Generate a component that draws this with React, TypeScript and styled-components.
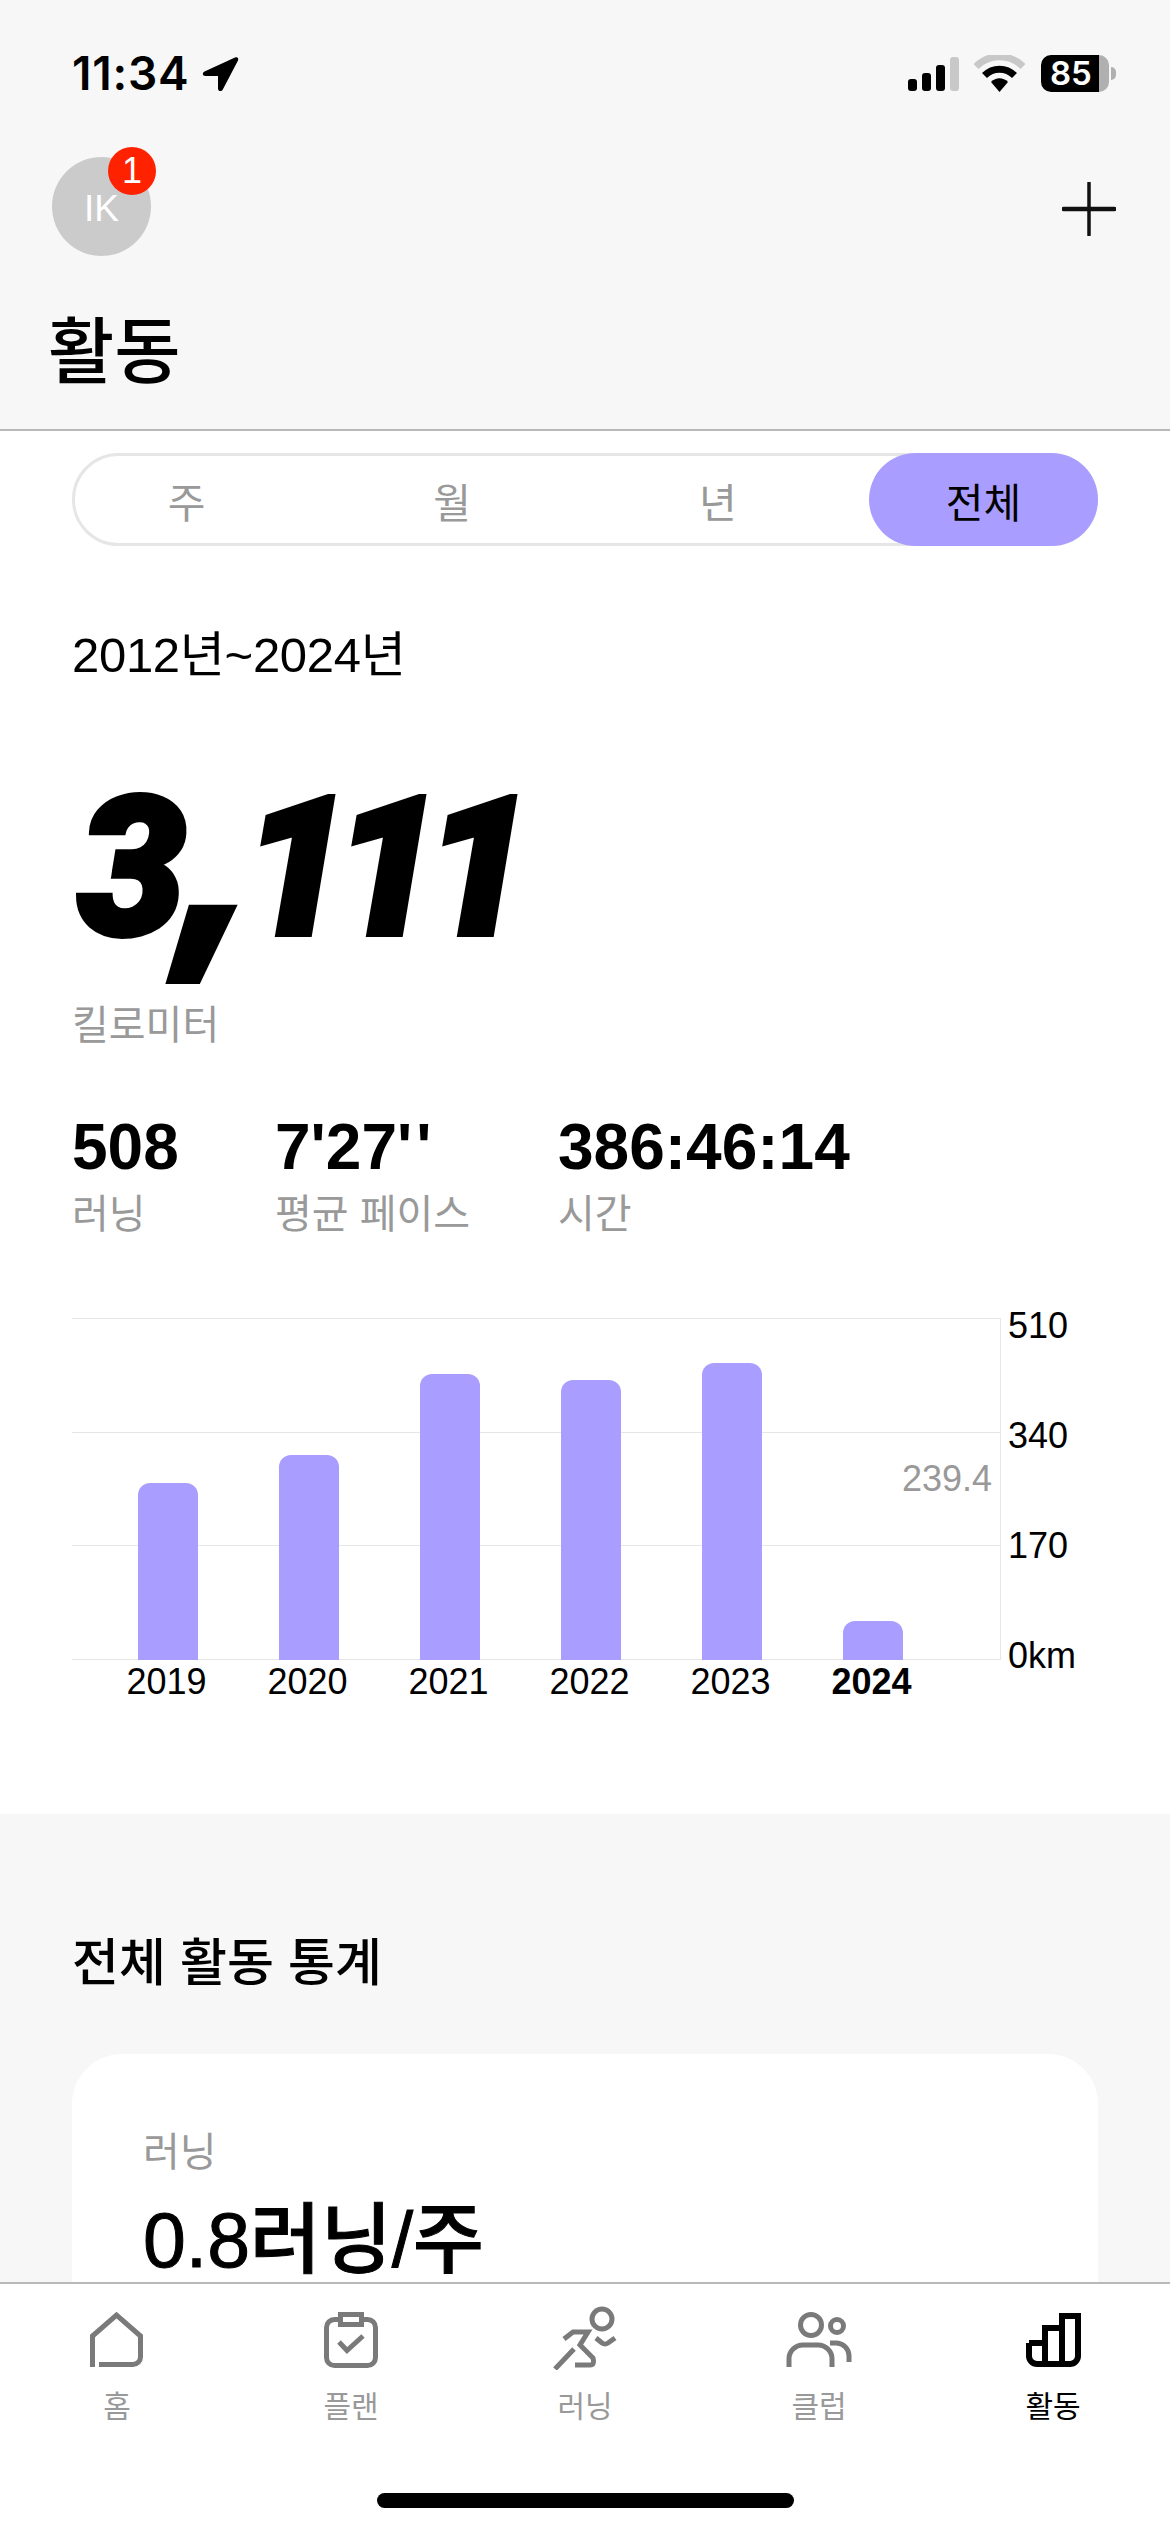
import React from 'react';
import styled, { createGlobalStyle } from 'styled-components';

const GlobalStyle = createGlobalStyle`
  html, body { margin: 0; padding: 0; background: #fff; }
  * { box-sizing: border-box; }
  body { font-family: "Liberation Sans", "Noto Sans CJK KR", sans-serif; color: #000; }
`;

const Page = styled.div`
  width: 1170px;
  height: 2532px;
  display: flex;
  flex-direction: column;
  overflow: hidden;
  background: #fff;
`;

const Header = styled.header`
  flex: none;
  height: 431px;
  background: #f7f7f7;
  border-bottom: 2px solid #b8b8b8;
`;

const StatusBar = styled.div`
  height: 147px;
  padding: 55px 54px 0 72px;
  display: flex;
  justify-content: space-between;
  align-items: flex-start;
`;

const TimeGroup = styled.div`
  display: flex;
  align-items: center;
  gap: 13px;
  height: 37px;
`;

const Time = styled.span`
  font-family: Inter, sans-serif;
  font-size: 46px;
  font-weight: 600;
  letter-spacing: 0.8px;
  line-height: 37px;
`;

const StatusIcons = styled.div`
  display: flex;
  align-items: center;
  height: 37px;
`;

const WifiIcon = styled.svg`
  margin-left: 14px;
`;

const Battery = styled.div`
  width: 68px;
  height: 37px;
  margin-left: 15px;
  border-radius: 10px;
  background: linear-gradient(90deg, #000 0 58px, #b0b0b0 58px);
  color: #fff;
  font-family: Inter, sans-serif;
  font-size: 33px;
  font-weight: 600;
  line-height: 37px;
  padding-left: 9px;
`;

const BatteryNub = styled.div`
  width: 5px;
  height: 13px;
  margin-left: 2px;
  border-radius: 0 6px 6px 0;
  background: #b0b0b0;
`;

const NavRow = styled.div`
  padding: 0 54px 0 52px;
  display: flex;
  justify-content: space-between;
  align-items: center;
`;

const Avatar = styled.div`
  position: relative;
  width: 99px;
  height: 99px;
  margin-top: 10px;
  border-radius: 50%;
  background: #cbcbcb;
  color: #fff;
  font-size: 37px;
  display: flex;
  align-items: center;
  justify-content: center;
  padding-top: 4px;
`;

const Badge = styled.span`
  position: absolute;
  top: -10px;
  left: 56px;
  width: 48px;
  height: 48px;
  border-radius: 50%;
  background: #ff2200;
  color: #fff;
  font-size: 36px;
  line-height: 48px;
  text-align: center;
`;

const PlusIcon = styled.svg`
  margin-top: 14px;
`;

const Title = styled.h1`
  margin: 56px 0 0 48px;
  font-size: 72px;
  font-weight: 500;
  line-height: 80px;
`;

const Content = styled.main`
  flex: 1;
  min-height: 0;
  overflow: hidden;
`;

const Summary = styled.section`
  height: 1383px;
  padding: 22px 72px 0;
  background: #fff;
`;

const Segments = styled.div`
  height: 93px;
  display: flex;
  justify-content: space-between;
  border: 3px solid #e6e6e6;
  border-radius: 47px;
  margin-bottom: 79px;
`;

const Segment = styled.div<{ $active?: boolean }>`
  width: 229px;
  margin: -3px;
  border-radius: 47px;
  background: ${p => (p.$active ? '#a99eff' : 'transparent')};
  color: ${p => (p.$active ? '#000' : '#999')};
  font-size: 41px;
  display: flex;
  align-items: center;
  justify-content: center;
`;

const DateRange = styled.div`
  font-size: 49px;
  line-height: 60px;
  letter-spacing: -0.3px;
`;

const BigNumber = styled.div`
  height: 180px;
  margin: 94px 0 0 6px;
  font-family: Roboto, "Liberation Sans", sans-serif;
  font-size: 192px;
  font-weight: 900;
  font-style: italic;
  line-height: 180px;
  letter-spacing: -17px;
  -webkit-text-stroke: 6px #000;
`;

const Comma = styled.span`
  font-family: Inter, Roboto, sans-serif;
  font-size: 225px;
  line-height: 0;
  margin: 0 -16px 0 6px;
  letter-spacing: 0;
`;

const Unit = styled.div`
  margin-top: 36px;
  font-size: 40px;
  line-height: 60px;
  color: #999;
`;

const Stats = styled.div`
  display: flex;
  margin-top: 55px;
`;

const Stat = styled.div<{ $width: number }>`
  width: ${p => p.$width}px;
`;

const StatValue = styled.div`
  font-size: 64px;
  font-weight: 700;
  line-height: 74px;
`;

const Ticks = styled.span`
  letter-spacing: 4px;
`;

const StatLabel = styled.div`
  margin-top: 2px;
  font-size: 40px;
  line-height: 56px;
  color: #999;
`;

const Chart = styled.div`
  display: flex;
  margin-top: 76px;
`;

const ChartMain = styled.div`
  width: 929px;
`;

const Plot = styled.div`
  position: relative;
  height: 342px;
  display: flex;
  align-items: flex-end;
  padding-left: 25px;
  border-right: 1px solid #e8e8e8;
`;

const GridLine = styled.div<{ $top: number }>`
  position: absolute;
  left: 0;
  right: 0;
  top: ${p => p.$top}px;
  height: 1px;
  background: #e6e6e6;
`;

const BarCell = styled.div`
  position: relative;
  width: 141px;
  display: flex;
  justify-content: center;
`;

const Bar = styled.div`
  width: 60px;
  background: #a99eff;
  border-radius: 12px 12px 0 0;
`;

const AverageLabel = styled.span`
  position: absolute;
  right: 8px;
  top: 141px;
  font-size: 36px;
  line-height: 40px;
  color: #999;
`;

const XAxis = styled.div`
  display: flex;
  padding-left: 25px;
`;

const XLabel = styled.div<{ $bold?: boolean }>`
  width: 141px;
  padding-right: 2px;
  text-align: center;
  font-size: 36px;
  line-height: 44px;
  font-weight: ${p => (p.$bold ? 700 : 400)};
`;

const YAxis = styled.div`
  margin-left: 7px;
  display: flex;
  flex-direction: column;
  font-size: 36px;
  line-height: 40px;
`;

const YLabel = styled.div`
  height: 110px;
  margin-top: -12px;
  & + & {
    margin-top: 0;
  }
`;

const Overall = styled.section`
  height: 600px;
  padding: 115px 72px 0;
  background: #f7f7f7;
`;

const SectionTitle = styled.h2`
  margin: 0;
  font-size: 51px;
  font-weight: 500;
  line-height: 70px;
`;

const Card = styled.div`
  margin-top: 55px;
  height: 500px;
  padding: 70px 71px;
  background: #fff;
  border-radius: 50px;
`;

const CardLabel = styled.div`
  font-size: 40px;
  line-height: 56px;
  color: #999;
`;

const CardValue = styled.div`
  margin-top: 15px;
  font-size: 77px;
  font-weight: 500;
  line-height: 90px;
  -webkit-text-stroke: 1px #000;
`;

const TabBar = styled.nav`
  flex: none;
  position: relative;
  height: 250px;
  background: #fff;
  border-top: 2px solid #b8b8b8;
`;

const Tabs = styled.div`
  display: grid;
  grid-template-columns: repeat(5, 234px);
  padding-top: 18px;
`;

const Tab = styled.div<{ $active?: boolean }>`
  display: flex;
  flex-direction: column;
  align-items: center;
  color: ${p => (p.$active ? '#000' : '#999')};
  font-size: 30px;
  line-height: 36px;
  svg {
    display: block;
    margin: 0 0 19px;
  }
`;

const HomeIndicator = styled.div`
  position: absolute;
  left: 377px;
  bottom: 24px;
  width: 417px;
  height: 15px;
  border-radius: 8px;
  background: #000;
`;

const years = [
  { year: 2019, height: 177 },
  { year: 2020, height: 205 },
  { year: 2021, height: 286 },
  { year: 2022, height: 280 },
  { year: 2023, height: 297 },
  { year: 2024, height: 39 },
];

const IconSvg = ({ children, color = '#7a7a7a', width = 5 }: { children: React.ReactNode; color?: string; width?: number }) => (
  <svg width="70" height="68" viewBox="0 0 70 68" fill="none" stroke={color} strokeWidth={width}>
    {children}
  </svg>
);

const tabs = [
  {
    label: '홈',
    icon: (
      <IconSvg>
        <path d="M10.500 65V34L34.500 13L58.500 34V55a7.500 7.500 0 0 1-7.500 7.500H17" />
      </IconSvg>
    ),
  },
  {
    label: '플랜',
    icon: (
      <IconSvg>
        <rect x="10.500" y="17.500" width="49" height="46" rx="8" />
        <rect x="24.500" y="12.500" width="21" height="10" fill="#fff" />
        <path d="M23 40l8 8.500 16-14.500" />
      </IconSvg>
    ),
  },
  {
    label: '러닝',
    icon: (
      <IconSvg>
        <circle cx="52" cy="17" r="10" />
        <path d="M14 37l9-7h15l-8 13 13 13q2 7-3 7H25" />
        <path d="M24 47L5 67M46 36l6 5q3 2 6 0l7-5" />
      </IconSvg>
    ),
  },
  {
    label: '클럽',
    icon: (
      <IconSvg>
        <circle cx="27" cy="23" r="10.500" />
        <circle cx="53" cy="24" r="6.500" />
        <path d="M5 65V57a14 14 0 0 1 14-14h15a14 14 0 0 1 14 14v8" />
        <path d="M46 41h6a13 13 0 0 1 13 13v6" />
      </IconSvg>
    ),
  },
  {
    label: '활동',
    active: true,
    icon: (
      <IconSvg color="#000" width={6}>
        <path d="M11 41H27M27 62V26H44M44 62V14H60V54a8 8 0 0 1-8 8H19a8 8 0 0 1-8-8V41" />
      </IconSvg>
    ),
  },
];

export default function App() {
  return (
    <>
      <GlobalStyle />
      <Page>
        <Header>
          <StatusBar>
            <TimeGroup>
              <Time>11:34</Time>
              <svg width="37" height="36" viewBox="0 0 37 36">
                <path d="M33 1.500 2.500 15.500c-2.500 1.200-2 4.500 1 4.500H16v12.500c0 3 3.500 3.500 4.800 1L36 4.500c1-2.500-.8-4-3-3z" fill="#000" />
              </svg>
            </TimeGroup>
            <StatusIcons>
              <svg width="52" height="36" viewBox="0 0 52 36">
                <rect x="0" y="23" width="9" height="12" rx="3" fill="#000" />
                <rect x="14" y="17" width="9" height="18" rx="3" fill="#000" />
                <rect x="28" y="9" width="9" height="26" rx="3" fill="#000" />
                <rect x="42" y="1" width="9" height="34" rx="3" fill="#c8c8c8" />
              </svg>
              <WifiIcon width="52" height="38" viewBox="0 0 52 38">
                <path d="M2 11.500C15 -1.500 36 -1.500 49 11.500" stroke="#c8c8c8" strokeWidth="7" fill="none" />
                <path d="M10.500 20.500C19 12 32 12 40.500 20.500" stroke="#000" strokeWidth="7" fill="none" />
                <path d="M17 27c5-5 12-5 17 0l-8.500 10z" fill="#000" />
              </WifiIcon>
              <Battery>85</Battery>
              <BatteryNub />
            </StatusIcons>
          </StatusBar>
          <NavRow>
            <Avatar>
              IK
              <Badge>1</Badge>
            </Avatar>
            <PlusIcon width="54" height="54" viewBox="0 0 54 54">
              <path d="M27 1v52" stroke="#111" strokeWidth="3.500" strokeLinecap="round" />
              <path d="M1.500 27h51" stroke="#111" strokeWidth="4.500" strokeLinecap="round" />
            </PlusIcon>
          </NavRow>
          <Title>활동</Title>
        </Header>
        <Content>
          <Summary>
            <Segments>
              <Segment>주</Segment>
              <Segment>월</Segment>
              <Segment>년</Segment>
              <Segment $active>전체</Segment>
            </Segments>
            <DateRange>2012년~2024년</DateRange>
            <BigNumber>
              3<Comma>,</Comma>111
            </BigNumber>
            <Unit>킬로미터</Unit>
            <Stats>
              <Stat $width={203}>
                <StatValue>508</StatValue>
                <StatLabel>러닝</StatLabel>
              </Stat>
              <Stat $width={283}>
                <StatValue>
                  7'27<Ticks>''</Ticks>
                </StatValue>
                <StatLabel>평균 페이스</StatLabel>
              </Stat>
              <Stat $width={400}>
                <StatValue>386:46:14</StatValue>
                <StatLabel>시간</StatLabel>
              </Stat>
            </Stats>
            <Chart>
              <ChartMain>
                <Plot>
                  <GridLine $top={0} />
                  <GridLine $top={114} />
                  <GridLine $top={227} />
                  <GridLine $top={341} />
                  {years.map(y => (
                    <BarCell key={y.year}>
                      <Bar style={{ height: y.height }} />
                    </BarCell>
                  ))}
                  <AverageLabel>239.4</AverageLabel>
                </Plot>
                <XAxis>
                  {years.map(y => (
                    <XLabel key={y.year} $bold={y.year === 2024}>
                      {y.year}
                    </XLabel>
                  ))}
                </XAxis>
              </ChartMain>
              <YAxis>
                <YLabel>510</YLabel>
                <YLabel>340</YLabel>
                <YLabel>170</YLabel>
                <YLabel>0km</YLabel>
              </YAxis>
            </Chart>
          </Summary>
          <Overall>
            <SectionTitle>전체 활동 통계</SectionTitle>
            <Card>
              <CardLabel>러닝</CardLabel>
              <CardValue>0.8러닝/주</CardValue>
            </Card>
          </Overall>
        </Content>
        <TabBar>
          <Tabs>
            {tabs.map(t => (
              <Tab key={t.label} $active={t.active}>
                {t.icon}
                {t.label}
              </Tab>
            ))}
          </Tabs>
          <HomeIndicator />
        </TabBar>
      </Page>
    </>
  );
}
